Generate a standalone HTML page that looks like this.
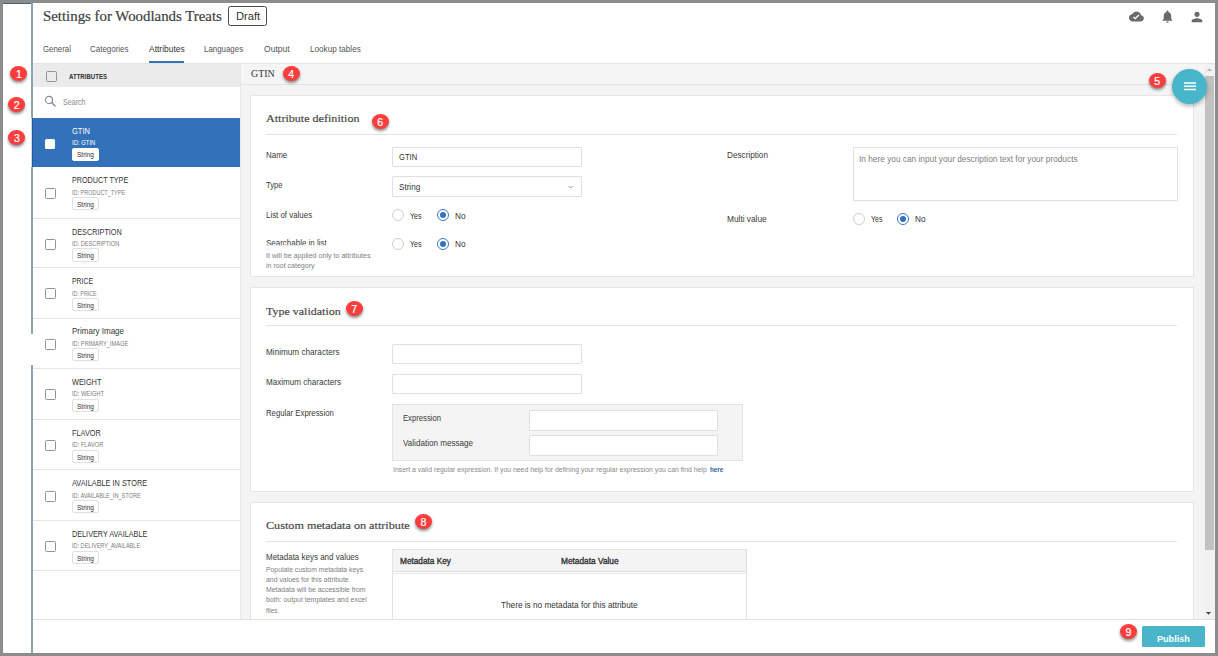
<!DOCTYPE html><html><head><meta charset="utf-8"><title>Settings</title><style>
html,body{margin:0;padding:0}
body{width:1218px;height:656px;overflow:hidden;background:#8c8c8c;font-family:"Liberation Sans",sans-serif;position:relative}
div,span,svg{position:absolute;box-sizing:border-box}
.t{white-space:nowrap;transform-origin:0 0}

.bd{width:17px;height:15px;border-radius:50%;background:#fa3d3d;color:#fff;font-size:10.6px;line-height:16.8px;-webkit-text-stroke:0.2px #fff;text-align:center;box-shadow:0 2px 3px rgba(0,0,0,.45)}
.inp{background:#fff;border:1px solid #e0e0e0;border-radius:1px}
.card{background:#fff;border:1px solid #e6e6e6}
.hr{height:1px;background:#e4e4e4}
.rad{width:12px;height:12px;border-radius:50%;border:1px solid #cfcfcf;background:#fff}
.rad.on{border-color:#3b7bc4}
.rad.on::after{content:"";position:absolute;left:2px;top:2px;width:6px;height:6px;border-radius:50%;background:#2f74c0}
.cb{width:11px;height:11px;border:1px solid #939393;border-radius:1.5px;background:#fff}
.sb{height:13.4px;width:27px;border:1px solid #e0e0e0;border-radius:2px;background:#fff}
.sep{height:1px;background:#e6e6e6;left:33px;width:207px}
</style></head><body>
<div style="left:3px;top:3px;width:1212px;height:650px;background:#fff"></div>
<div style="left:3px;top:3px;width:29.5px;height:1.2px;background:#3d6a7a"></div>
<div style="left:31.2px;top:3px;width:1.9px;height:650px;background:#8aa4b2"></div>
<div style="left:30px;top:334.4px;width:3.3px;height:30.4px;background:#fff"></div>
<div style="left:33px;top:63px;width:1182px;height:1px;background:#e2e2e2"></div>
<div style="left:227.8px;top:5.8px;width:39.4px;height:19.8px;border:1px solid #4a4a4a;border-radius:2.5px"></div>
<div style="left:148.6px;top:61.3px;width:35.6px;height:1.9px;background:#3574ba"></div>
<svg style="left:1129.3px;top:9.1px" width="14.9" height="14.9" viewBox="0 0 24 24"><path fill="#6a6a6a" d="M19.35 10.04C18.67 6.59 15.64 4 12 4 9.11 4 6.6 5.64 5.35 8.04 2.34 8.36 0 10.91 0 14c0 3.31 2.69 6 6 6h13c2.76 0 5-2.24 5-5 0-2.64-2.05-4.78-4.65-4.96zM10 17l-3.5-3.5 1.41-1.41L10 14.17 15.18 9l1.41 1.41L10 17z"/></svg>
<svg style="left:1159.8px;top:8.5px" width="14.9" height="14.9" viewBox="0 0 24 24"><path fill="#6a6a6a" d="M12 22c1.1 0 2-.9 2-2h-4c0 1.1.89 2 2 2zm6-6v-5c0-3.07-1.64-5.64-4.5-6.32V4c0-.83-.67-1.5-1.5-1.5s-1.5.67-1.5 1.5v.68C7.63 5.36 6 7.92 6 11v5l-2 2v1h16v-1l-2-2z"/></svg>
<svg style="left:1189.3px;top:9.2px" width="16" height="16" viewBox="0 0 24 24"><path fill="#6a6a6a" d="M12 12c2.21 0 4-1.79 4-4s-1.79-4-4-4-4 1.79-4 4 1.79 4 4 4zm0 2c-2.67 0-8 1.34-8 4v2h16v-2c0-2.66-5.33-4-8-4z"/></svg>
<div style="left:240px;top:64px;width:975px;height:555.5px;background:#f4f4f4"></div>
<div style="left:33px;top:63.6px;width:207px;height:23.3px;background:#ebebeb"></div>
<div style="left:33px;top:87px;width:207px;height:532px;background:#fff"></div>
<div style="left:239.5px;top:64px;width:1px;height:555px;background:#e9e9e9"></div>
<div class="cb" style="left:45.8px;top:71px;background:#ebebeb"></div>
<svg style="left:43px;top:94px" width="14" height="14" viewBox="0 0 14 14"><circle cx="6" cy="5.9" r="3.55" fill="none" stroke="#8a8a8a" stroke-width="1.1"/><path d="M8.6 8.6 L12.1 12" stroke="#8a8a8a" stroke-width="1.4" stroke-linecap="round"/></svg>
<div style="left:32px;top:117.80px;width:208px;height:49.7px;background:#3372b8"></div>
<div style="left:31px;top:117.80px;width:1px;height:49.7px;background:#d3dbdf"></div>
<div style="left:32px;top:117.80px;width:0.8px;height:49.7px;background:#1f5b9d"></div>
<div style="left:45px;top:139.00px;width:10px;height:10px;background:#fff;border-radius:1.5px"></div>
<div class="sb" style="left:72px;top:148.00px;border-color:#fff"></div>
<div class="cb" style="left:44.8px;top:187.70px"></div>
<div class="sb" style="left:72px;top:197.10px"></div>
<div class="sep" style="top:217.70px"></div>
<div class="cb" style="left:44.8px;top:238.90px"></div>
<div class="sb" style="left:72px;top:248.30px"></div>
<div class="sep" style="top:267.10px"></div>
<div class="cb" style="left:44.8px;top:288.30px"></div>
<div class="sb" style="left:72px;top:297.70px"></div>
<div class="sep" style="top:317.50px"></div>
<div class="cb" style="left:44.8px;top:338.70px"></div>
<div class="sb" style="left:72px;top:348.10px"></div>
<div class="sep" style="top:367.90px"></div>
<div class="cb" style="left:44.8px;top:389.10px"></div>
<div class="sb" style="left:72px;top:398.50px"></div>
<div class="sep" style="top:418.90px"></div>
<div class="cb" style="left:44.8px;top:440.10px"></div>
<div class="sb" style="left:72px;top:449.50px"></div>
<div class="sep" style="top:469.40px"></div>
<div class="cb" style="left:44.8px;top:490.60px"></div>
<div class="sb" style="left:72px;top:500.00px"></div>
<div class="sep" style="top:520.00px"></div>
<div class="cb" style="left:44.8px;top:541.20px"></div>
<div class="sb" style="left:72px;top:550.60px"></div>
<div class="sep" style="top:569.80px"></div>
<div style="left:240px;top:64px;width:963.5px;height:20.6px;background:#f5f5f5;border-bottom:1px solid #e2e2e2;border-left:1px solid #e6e6e6"></div>
<div class="card" style="left:249.7px;top:95px;width:944.2px;height:182px"></div>
<div class="card" style="left:249.7px;top:287px;width:944.2px;height:204.7px"></div>
<div class="card" style="left:249.7px;top:502px;width:944.2px;height:140px"></div>
<div class="hr" style="left:266px;top:134px;width:911.2px"></div>
<div class="hr" style="left:266px;top:325px;width:911.2px"></div>
<div class="hr" style="left:266px;top:541px;width:911.2px"></div>
<div class="inp" style="left:391.8px;top:147.3px;width:190.00px;height:19.60px;"></div>
<div class="inp" style="left:391.8px;top:176.3px;width:190.00px;height:20.50px;"></div>
<svg style="left:566.9px;top:183.6px" width="7" height="6" viewBox="0 0 7 6"><path d="M1.5 2 L3.5 4 L5.5 2" fill="none" stroke="#777" stroke-width="0.8"/></svg>
<div class="inp" style="left:852.6px;top:146.8px;width:325.10px;height:54.20px;"></div>
<div class="inp" style="left:391.8px;top:343.5px;width:190.00px;height:20.60px;"></div>
<div class="inp" style="left:391.8px;top:374.3px;width:190.00px;height:19.70px;"></div>
<div style="left:392px;top:404px;width:351.4px;height:57.2px;background:#f4f4f4;border:1px solid #e3e3e3"></div>
<div class="inp" style="left:528.9px;top:409.6px;width:189.20px;height:21.00px;"></div>
<div class="inp" style="left:528.9px;top:434.9px;width:189.20px;height:21.00px;"></div>
<div class="rad" style="left:392.4px;top:209.1px"></div>
<div class="rad on" style="left:436.5px;top:209.1px"></div>
<div class="rad" style="left:392.4px;top:237.9px"></div>
<div class="rad on" style="left:436.5px;top:237.9px"></div>
<div class="rad" style="left:853.1px;top:213.1px"></div>
<div class="rad on" style="left:897.3px;top:213.1px"></div>
<div style="left:392.2px;top:548.8px;width:354.6px;height:90px;border:1px solid #e3e3e3;background:#fff"></div>
<div style="left:393.2px;top:549.8px;width:352.6px;height:21.8px;background:#f4f4f4;border-bottom:1px solid #e0e0e0"></div>
<div style="left:393.2px;top:573px;width:352.6px;height:1px;background:#e6e6e6"></div>
<div style="left:1203.6px;top:64px;width:11.4px;height:555.5px;background:#f1f1f1"></div>
<div style="left:1204.8px;top:76px;width:8.8px;height:474.4px;background:#c1c1c1"></div>
<svg style="left:1205.5px;top:67.3px" width="7" height="5" viewBox="0 0 7 5"><path d="M0.8 4 L3.5 1.2 L6.2 4Z" fill="#b4b4b4"/></svg>
<svg style="left:1205.4px;top:610.9px" width="7" height="5" viewBox="0 0 7 5"><path d="M0.9 0.9 L3.5 3.7 L6.1 0.9Z" fill="#444"/></svg>
<div style="left:1172.1px;top:69px;width:35.4px;height:35.4px;border-radius:50%;background:#48b6ca;box-shadow:0 2px 4px rgba(0,0,0,.3)"></div>
<svg style="left:1183px;top:81px" width="14" height="10" viewBox="0 0 14 10"><path d="M1 1.2h12.1v1.6H1zM1 4.45h12.1v1.6H1zM1 7.7h12.1v1.6H1z" fill="#fff"/></svg>
<div style="left:33px;top:619px;width:1182px;height:34px;background:#fff;border-top:1px solid #e1e1e1"></div>
<div style="left:1141.8px;top:626.4px;width:63.1px;height:20.7px;background:#4ab5ca;border-radius:1.5px"></div>
<span class="t" id="t0" style="left:42.80px;top:5.64px;font-size:15px;line-height:20px;color:#404040;font-family:'Liberation Serif', serif;transform:scaleX(0.9900);-webkit-text-stroke:0.2px #404040;">Settings for Woodlands Treats</span>
<span class="t" id="t1" style="left:235.90px;top:8.59px;font-size:11px;line-height:14px;color:#333;transform:scaleX(1.0149);">Draft</span>
<span class="t" id="t2" style="left:43.00px;top:42.88px;font-size:9px;line-height:12px;color:#555;transform:scaleX(0.8710);">General</span>
<span class="t" id="t3" style="left:89.90px;top:42.88px;font-size:9px;line-height:12px;color:#555;transform:scaleX(0.8844);">Categories</span>
<span class="t" id="t4" style="left:148.50px;top:42.88px;font-size:9px;line-height:12px;color:#333;transform:scaleX(0.9387);">Attributes</span>
<span class="t" id="t5" style="left:204.30px;top:42.88px;font-size:9px;line-height:12px;color:#555;transform:scaleX(0.8777);">Languages</span>
<span class="t" id="t6" style="left:263.50px;top:42.88px;font-size:9px;line-height:12px;color:#555;transform:scaleX(0.9508);">Output</span>
<span class="t" id="t7" style="left:309.60px;top:42.88px;font-size:9px;line-height:12px;color:#555;transform:scaleX(0.9064);">Lookup tables</span>
<span class="t" id="t8" style="left:69.00px;top:71.94px;font-size:6.8px;line-height:9px;color:#333;font-weight:bold;transform:scaleX(0.8931);">ATTRIBUTES</span>
<span class="t" id="t9" style="left:63.20px;top:96.48px;font-size:9px;line-height:12px;color:#8a8a8a;transform:scaleX(0.7921);">Search</span>
<span class="t" id="t10" style="left:72.00px;top:124.78px;font-size:9.3px;line-height:12px;color:#fff;transform:scaleX(0.8101);">GTIN</span>
<span class="t" id="t11" style="left:72.00px;top:138.24px;font-size:6.8px;line-height:9px;color:#fff;transform:scaleX(0.8690);">ID: GTIN</span>
<span class="t" id="t12" style="left:77.00px;top:150.47px;font-size:7px;line-height:9px;color:#333;transform:scaleX(0.9291);">String</span>
<span class="t" id="t13" style="left:72.00px;top:174.48px;font-size:9.3px;line-height:12px;color:#333;transform:scaleX(0.7752);">PRODUCT TYPE</span>
<span class="t" id="t14" style="left:72.00px;top:187.94px;font-size:6.8px;line-height:9px;color:#7c7c7c;transform:scaleX(0.8080);">ID: PRODUCT_TYPE</span>
<span class="t" id="t15" style="left:77.00px;top:200.17px;font-size:7px;line-height:9px;color:#333;transform:scaleX(0.9291);">String</span>
<span class="t" id="t16" style="left:72.00px;top:225.68px;font-size:9.3px;line-height:12px;color:#333;transform:scaleX(0.7837);">DESCRIPTION</span>
<span class="t" id="t17" style="left:72.00px;top:239.14px;font-size:6.8px;line-height:9px;color:#7c7c7c;transform:scaleX(0.8276);">ID: DESCRIPTION</span>
<span class="t" id="t18" style="left:77.00px;top:251.37px;font-size:7px;line-height:9px;color:#333;transform:scaleX(0.9291);">String</span>
<span class="t" id="t19" style="left:72.00px;top:275.08px;font-size:9.3px;line-height:12px;color:#333;transform:scaleX(0.7389);">PRICE</span>
<span class="t" id="t20" style="left:72.00px;top:288.54px;font-size:6.8px;line-height:9px;color:#7c7c7c;transform:scaleX(0.7876);">ID: PRICE</span>
<span class="t" id="t21" style="left:77.00px;top:300.77px;font-size:7px;line-height:9px;color:#333;transform:scaleX(0.9291);">String</span>
<span class="t" id="t22" style="left:72.00px;top:325.48px;font-size:9.3px;line-height:12px;color:#333;transform:scaleX(0.8602);">Primary Image</span>
<span class="t" id="t23" style="left:72.00px;top:338.94px;font-size:6.8px;line-height:9px;color:#7c7c7c;transform:scaleX(0.8374);">ID: PRIMARY_IMAGE</span>
<span class="t" id="t24" style="left:77.00px;top:351.17px;font-size:7px;line-height:9px;color:#333;transform:scaleX(0.9291);">String</span>
<span class="t" id="t25" style="left:72.00px;top:375.88px;font-size:9.3px;line-height:12px;color:#333;transform:scaleX(0.7906);">WEIGHT</span>
<span class="t" id="t26" style="left:72.00px;top:389.34px;font-size:6.8px;line-height:9px;color:#7c7c7c;transform:scaleX(0.8447);">ID: WEIGHT</span>
<span class="t" id="t27" style="left:77.00px;top:401.57px;font-size:7px;line-height:9px;color:#333;transform:scaleX(0.9291);">String</span>
<span class="t" id="t28" style="left:72.00px;top:426.88px;font-size:9.3px;line-height:12px;color:#333;transform:scaleX(0.7887);">FLAVOR</span>
<span class="t" id="t29" style="left:72.00px;top:440.34px;font-size:6.8px;line-height:9px;color:#7c7c7c;transform:scaleX(0.8399);">ID: FLAVOR</span>
<span class="t" id="t30" style="left:77.00px;top:452.57px;font-size:7px;line-height:9px;color:#333;transform:scaleX(0.9291);">String</span>
<span class="t" id="t31" style="left:72.00px;top:477.38px;font-size:9.3px;line-height:12px;color:#333;transform:scaleX(0.7899);">AVAILABLE IN STORE</span>
<span class="t" id="t32" style="left:72.00px;top:490.84px;font-size:6.8px;line-height:9px;color:#7c7c7c;transform:scaleX(0.8228);">ID: AVAILABLE_IN_STORE</span>
<span class="t" id="t33" style="left:77.00px;top:503.07px;font-size:7px;line-height:9px;color:#333;transform:scaleX(0.9291);">String</span>
<span class="t" id="t34" style="left:72.00px;top:527.98px;font-size:9.3px;line-height:12px;color:#333;transform:scaleX(0.7806);">DELIVERY AVAILABLE</span>
<span class="t" id="t35" style="left:72.00px;top:541.44px;font-size:6.8px;line-height:9px;color:#7c7c7c;transform:scaleX(0.8156);">ID: DELIVERY_AVAILABLE</span>
<span class="t" id="t36" style="left:77.00px;top:553.67px;font-size:7px;line-height:9px;color:#333;transform:scaleX(0.9291);">String</span>
<span class="t" id="t37" style="left:250.80px;top:67.06px;font-size:10.5px;line-height:14px;color:#333;font-family:'Liberation Serif', serif;transform:scaleX(0.9450);">GTIN</span>
<span class="t" id="t38" style="left:265.80px;top:111.29px;font-size:11px;line-height:14px;color:#484848;font-family:'Liberation Serif', serif;transform:scaleX(1.0970);-webkit-text-stroke:0.18px #484848;">Attribute definition</span>
<span class="t" id="t39" style="left:265.80px;top:303.79px;font-size:11px;line-height:14px;color:#484848;font-family:'Liberation Serif', serif;transform:scaleX(1.0893);-webkit-text-stroke:0.18px #484848;">Type validation</span>
<span class="t" id="t40" style="left:265.80px;top:518.19px;font-size:11px;line-height:14px;color:#484848;font-family:'Liberation Serif', serif;transform:scaleX(1.1067);-webkit-text-stroke:0.18px #484848;">Custom metadata on attribute</span>
<span class="t" id="t41" style="left:266.40px;top:150.19px;font-size:8.7px;line-height:11px;color:#3a3a3a;transform:scaleX(0.9186);">Name</span>
<span class="t" id="t42" style="left:266.40px;top:180.39px;font-size:8.7px;line-height:11px;color:#3a3a3a;transform:scaleX(0.8809);">Type</span>
<span class="t" id="t43" style="left:266.40px;top:209.59px;font-size:8.7px;line-height:11px;color:#3a3a3a;transform:scaleX(0.9089);">List of values</span>
<span class="t" id="t44" style="left:266.40px;top:238.29px;font-size:8.7px;line-height:11px;color:#3a3a3a;transform:scaleX(0.9188);clip-path:inset(0 0 4.1px 0);">Searchable in list</span>
<span class="t" id="t45" style="left:266.40px;top:250.84px;font-size:6.8px;line-height:9px;color:#808080;transform:scaleX(1.0447);">It will be applied only to attributes</span>
<span class="t" id="t46" style="left:266.40px;top:261.14px;font-size:6.8px;line-height:9px;color:#808080;transform:scaleX(1.0371);">in root category</span>
<span class="t" id="t47" style="left:726.90px;top:150.29px;font-size:8.7px;line-height:11px;color:#3a3a3a;transform:scaleX(0.9432);">Description</span>
<span class="t" id="t48" style="left:726.90px;top:213.69px;font-size:8.7px;line-height:11px;color:#3a3a3a;transform:scaleX(0.9559);">Multi value</span>
<span class="t" id="t49" style="left:399.30px;top:151.99px;font-size:8.7px;line-height:11px;color:#333;transform:scaleX(0.8764);">GTIN</span>
<span class="t" id="t50" style="left:399.30px;top:181.59px;font-size:8.7px;line-height:11px;color:#333;transform:scaleX(0.9338);">String</span>
<span class="t" id="t51" style="left:410.10px;top:210.59px;font-size:8.7px;line-height:11px;color:#333;transform:scaleX(0.8044);">Yes</span>
<span class="t" id="t52" style="left:454.60px;top:210.59px;font-size:8.7px;line-height:11px;color:#333;transform:scaleX(0.9451);">No</span>
<span class="t" id="t53" style="left:410.10px;top:239.39px;font-size:8.7px;line-height:11px;color:#333;transform:scaleX(0.8044);">Yes</span>
<span class="t" id="t54" style="left:454.60px;top:239.39px;font-size:8.7px;line-height:11px;color:#333;transform:scaleX(0.9451);">No</span>
<span class="t" id="t55" style="left:870.80px;top:214.49px;font-size:8.7px;line-height:11px;color:#333;transform:scaleX(0.8044);">Yes</span>
<span class="t" id="t56" style="left:915.30px;top:214.49px;font-size:8.7px;line-height:11px;color:#333;transform:scaleX(0.9451);">No</span>
<span class="t" id="t57" style="left:858.70px;top:154.45px;font-size:8.8px;line-height:11px;color:#7d7d7d;transform:scaleX(0.9431);">In here you can input your description text for your products</span>
<span class="t" id="t58" style="left:266.40px;top:346.59px;font-size:8.7px;line-height:11px;color:#3a3a3a;transform:scaleX(0.9410);">Minimum characters</span>
<span class="t" id="t59" style="left:266.40px;top:377.39px;font-size:8.7px;line-height:11px;color:#3a3a3a;transform:scaleX(0.9302);">Maximum characters</span>
<span class="t" id="t60" style="left:266.40px;top:407.79px;font-size:8.7px;line-height:11px;color:#3a3a3a;transform:scaleX(0.8943);">Regular Expression</span>
<span class="t" id="t61" style="left:403.00px;top:413.19px;font-size:8.7px;line-height:11px;color:#3a3a3a;transform:scaleX(0.8840);">Expression</span>
<span class="t" id="t62" style="left:403.00px;top:438.39px;font-size:8.7px;line-height:11px;color:#3a3a3a;transform:scaleX(0.9310);">Validation message</span>
<span class="t" id="t63" style="left:392.50px;top:465.14px;font-size:6.8px;line-height:9px;color:#8a8a8a;transform:scaleX(1.0113);">Insert a valid regular expression. If you need help for defining your regular expression you can find help</span>
<span class="t" id="t64" style="left:710.00px;top:465.14px;font-size:6.8px;line-height:9px;color:#2b5c9e;font-weight:bold;transform:scaleX(0.9193);">here</span>
<span class="t" id="t65" style="left:266.40px;top:550.78px;font-size:9px;line-height:12px;color:#3a3a3a;transform:scaleX(0.8874);">Metadata keys and values</span>
<span class="t" id="t66" style="left:266.40px;top:565.14px;font-size:6.8px;line-height:9px;color:#808080;transform:scaleX(1.0038);">Populate custom metadata keys</span>
<span class="t" id="t67" style="left:266.40px;top:575.24px;font-size:6.8px;line-height:9px;color:#808080;transform:scaleX(1.0132);">and values for this attribute.</span>
<span class="t" id="t68" style="left:266.40px;top:585.34px;font-size:6.8px;line-height:9px;color:#808080;transform:scaleX(1.0139);">Metadata will be accessible from</span>
<span class="t" id="t69" style="left:266.40px;top:595.44px;font-size:6.8px;line-height:9px;color:#808080;transform:scaleX(1.0260);">both: output templates and excel</span>
<span class="t" id="t70" style="left:266.40px;top:605.54px;font-size:6.8px;line-height:9px;color:#808080;transform:scaleX(0.9439);">files.</span>
<span class="t" id="t71" style="left:400.00px;top:556.09px;font-size:8.7px;line-height:11px;color:#333;transform:scaleX(0.9513);-webkit-text-stroke:0.35px #333;">Metadata Key</span>
<span class="t" id="t72" style="left:560.80px;top:556.09px;font-size:8.7px;line-height:11px;color:#333;transform:scaleX(0.9565);-webkit-text-stroke:0.35px #333;">Metadata Value</span>
<span class="t" id="t73" style="left:501.00px;top:600.29px;font-size:8.7px;line-height:11px;color:#333;transform:scaleX(0.9460);">There is no metadata for this attribute</span>
<span class="t" id="t74" style="left:1157.00px;top:633.05px;font-size:9.1px;line-height:12px;color:#fff;font-weight:bold;">Publish</span>
<div class="bd" style="left:10.45px;top:66.00px">1</div>
<div class="bd" style="left:8.10px;top:96.95px">2</div>
<div class="bd" style="left:8.40px;top:130.00px">3</div>
<div class="bd" style="left:282.70px;top:66.00px">4</div>
<div class="bd" style="left:1148.80px;top:73.05px">5</div>
<div class="bd" style="left:371.60px;top:114.35px">6</div>
<div class="bd" style="left:345.70px;top:301.20px">7</div>
<div class="bd" style="left:414.90px;top:514.45px">8</div>
<div class="bd" style="left:1119.90px;top:623.70px">9</div>
</body></html>
